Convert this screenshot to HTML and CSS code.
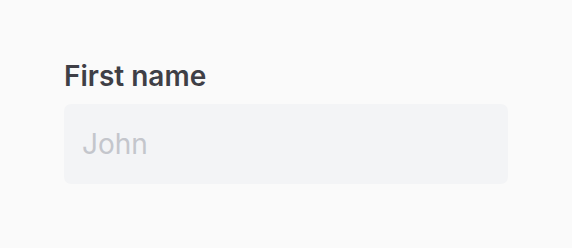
FILE: index.html
```html
<!DOCTYPE html>
<html>
<head>
    <title>First name</title>
    <link rel="stylesheet" href="styles.css">
</head>
<body>
<div class="container">
    <div class="form-group">
        <label for="first_name">First name</label>
        <input type="text" id="first_name" name="first_name" placeholder="John">
    </div>
</div>
</body>
</html>
```

FILE: styles.css
```css
body {
    margin: 0;
    font-family: Inter, "Noto Sans", sans-serif;
    background-color: #fafafa;
}
.container {
    padding: 59px 64px;
}
.form-group label {
    display: block;
    margin-bottom: 11px;
    font-size: 28px;
    font-weight: 600;
    line-height: 34px;
    color: #3f3f46;
}
.form-group input {
    display: block;
    box-sizing: border-box;
    width: 444px;
    height: 80px;
    padding: 0 18px;
    border: none;
    border-radius: 7px;
    background-color: #f3f4f6;
    font-family: inherit;
    font-size: 28px;
    color: #3f3f46;
    outline: none;
}
.form-group input::placeholder {
    color: #c4c6cc;
}
```
